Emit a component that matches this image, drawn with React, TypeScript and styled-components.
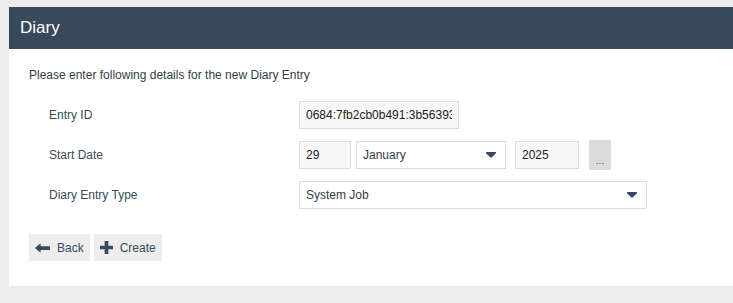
import styled, { createGlobalStyle } from "styled-components";

const GlobalStyle = createGlobalStyle`
  html, body {
    margin: 0;
    padding: 0;
    background: #ededed;
    font-family: "Liberation Sans", Arial, sans-serif;
  }
`;

const months = [
  "January", "February", "March", "April", "May", "June",
  "July", "August", "September", "October", "November", "December",
];

function Caret() {
  return (
    <CaretIcon viewBox="0 0 10 6" width="10" height="6">
      <path d="M0 0h10v1.2L5 6 0 1.2z" fill="#37495a" />
    </CaretIcon>
  );
}

export default function App() {
  return (
    <>
      <GlobalStyle />
      <Page>
        <Panel>
          <Header>Diary</Header>
          <Body>
            <Intro>Please enter following details for the new Diary Entry</Intro>
            <Form>
              <Label>Entry ID</Label>
              <Field>
                <TextInput $width={160} readOnly value="0684:7fb2cb0b491:3b5639382" />
              </Field>

              <Label>Start Date</Label>
              <Field>
                <TextInput $width={52} defaultValue="29" />
                <SelectBox $width={150}>
                  <SelectValue>January</SelectValue>
                  <Caret />
                  <HiddenSelect defaultValue="January">
                    {months.map((m) => (
                      <option key={m}>{m}</option>
                    ))}
                  </HiddenSelect>
                </SelectBox>
                <TextInput $width={64} $gap={9} defaultValue="2025" />
                <PickerButton $gap={10}>...</PickerButton>
              </Field>

              <Label>Diary Entry Type</Label>
              <Field>
                <SelectBox $width={348}>
                  <SelectValue>System Job</SelectValue>
                  <Caret />
                </SelectBox>
              </Field>
            </Form>
            <Actions>
              <ActionButton>
                <svg viewBox="0 0 16 10" width="15" height="10">
                  <path d="M0 5 6 0v3h10v4H6v3z" fill="#37495a" />
                </svg>
                Back
              </ActionButton>
              <ActionButton>
                <svg viewBox="0 0 14 14" width="13" height="13">
                  <path d="M5 0h4v5h5v4H9v5H5V9H0V5h5z" fill="#37495a" />
                </svg>
                Create
              </ActionButton>
            </Actions>
          </Body>
        </Panel>
      </Page>
    </>
  );
}

const Page = styled.div`
  padding: 7px 0 17px 9px;
`;

const Panel = styled.div`
  background: #ffffff;
`;

const Header = styled.div`
  background: #37495a;
  color: #ffffff;
  height: 42px;
  display: flex;
  align-items: center;
  padding-left: 11px;
  font-size: 17px;
`;

const Body = styled.div`
  padding: 18px 20px 25px 20px;
  color: #37495a;
  font-size: 12px;
`;

const Intro = styled.div`
  line-height: 16px;
  color: #333d47;
`;

const Form = styled.div`
  display: grid;
  grid-template-columns: 250px 1fr;
  row-gap: 11px;
  align-items: center;
  margin: 18px 0 0 20px;
`;

const Label = styled.div`
  color: #37495a;
  font-size: 12px;
`;

const Field = styled.div`
  display: flex;
  align-items: center;
  gap: 5px;
  min-height: 28px;
`;

const TextInput = styled.input<{ $width: number; $gap?: number }>`
  box-sizing: border-box;
  width: ${(p) => p.$width}px;
  height: 28px;
  margin-left: ${(p) => (p.$gap ? p.$gap - 5 : 0)}px;
  border: 1px solid #dddddd;
  background: #f8f8f8;
  padding: 0 6px;
  font-family: "Liberation Sans", Arial, sans-serif;
  font-size: 12px;
  color: #222222;
  outline: none;
`;

const SelectBox = styled.div<{ $width: number }>`
  position: relative;
  box-sizing: border-box;
  width: ${(p) => p.$width}px;
  height: 28px;
  border: 1px solid #dddddd;
  background: #ffffff;
  display: flex;
  align-items: center;
  justify-content: space-between;
  padding: 0 9px 0 6px;
`;

const SelectValue = styled.span`
  color: #333d47;
  font-size: 12px;
`;

const HiddenSelect = styled.select`
  position: absolute;
  inset: 0;
  opacity: 0;
`;

const CaretIcon = styled.svg`
  display: block;
`;

const PickerButton = styled.button<{ $gap?: number }>`
  width: 22px;
  height: 30px;
  margin-left: ${(p) => (p.$gap ? p.$gap - 5 : 0)}px;
  border: none;
  background: #dcdcdc;
  color: #37495a;
  font-size: 10px;
  padding: 10px 0 0 0;
  font-family: "Liberation Sans", Arial, sans-serif;
`;

const Actions = styled.div`
  display: flex;
  gap: 4px;
  margin-top: 25px;
`;

const ActionButton = styled.button`
  display: flex;
  align-items: center;
  gap: 7px;
  height: 27px;
  padding: 0 6px 0 6px;
  border: none;
  background: #ededed;
  color: #37495a;
  font-family: "Liberation Sans", Arial, sans-serif;
  font-size: 12px;
`;
